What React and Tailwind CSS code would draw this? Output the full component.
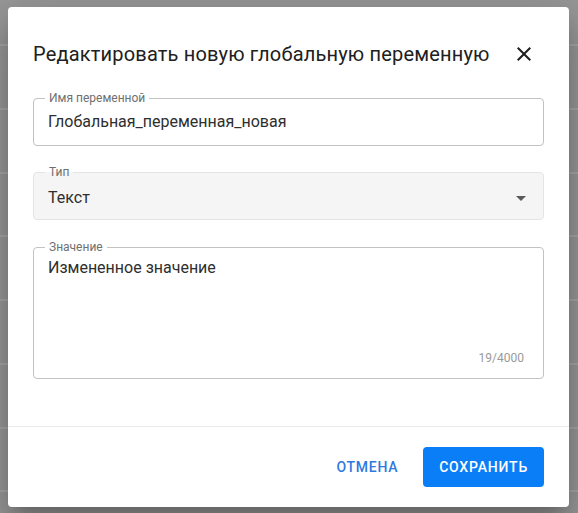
import React from "react";

const font = { fontFamily: "Roboto, 'Noto Sans', Arial, sans-serif" };

function Field({ label, children, className = "", labelBg = "bg-white" }) {
  return (
    <div className={`relative rounded-[4px] border ${className}`}>
      <span
        className={`absolute left-[11px] top-[-8px] px-[4px] text-[12px] leading-[14px] text-[#6f6f6f] ${labelBg}`}
      >
        {label}
      </span>
      {children}
    </div>
  );
}

export default function App() {
  const rows = Array.from({ length: 8 });
  return (
    <div className="relative h-[513px] w-[578px] overflow-hidden bg-[#989898]" style={font}>
      {/* dimmed page behind */}
      <div className="flex flex-col">
        <div className="h-[44px] shrink-0" />
        {rows.map((_, i) => (
          <div key={i} className="h-[63.75px] shrink-0 border-t-[2px] border-[#a6a6a6]" />
        ))}
      </div>

      {/* dialog */}
      <div className="absolute left-[8px] top-[7px] flex h-[500px] w-[561px] flex-col rounded-[4px] bg-white shadow-[0_11px_15px_-7px_rgba(0,0,0,0.2),0_24px_38px_3px_rgba(0,0,0,0.14),0_9px_46px_8px_rgba(0,0,0,0.12)]">
        <div className="flex items-center justify-between pl-[25px] pr-[33px] pt-[31px]">
          <h2 className="text-[20px] font-normal leading-[32px] tracking-[0.18px] text-[#202020]">
            Редактировать новую глобальную переменную
          </h2>
          <svg viewBox="0 0 24 24" className="h-[24px] w-[24px] fill-[#1f1f1f]">
            <path d="M19 6.41 17.59 5 12 10.59 6.41 5 5 6.41 10.59 12 5 17.59 6.41 19 12 13.41 17.59 19 19 17.59 13.41 12z" />
          </svg>
        </div>

        <div className="flex flex-col gap-[26px] px-[25px] pt-[28px]">
          <Field label="Имя переменной" className="h-[48px] border-[#c2c2c2]">
            <div className="flex h-full items-center pl-[14px] text-[16px] text-[#2e2e2e]">
              Глобальная_переменная_новая
            </div>
          </Field>

          <Field
            label="Тип"
            className="h-[48px] border-[#e4e4e4] bg-[#f5f5f5]"
            labelBg="bg-[linear-gradient(to_bottom,#ffffff_50%,#f5f5f5_50%)]"
          >
            <div className="flex h-full items-center justify-between pl-[14px] pr-[10px] pt-[3px] text-[16px] text-[#2e2e2e]">
              <span>Текст</span>
              <svg viewBox="0 0 24 24" className="h-[24px] w-[24px] fill-[#5a5a5a]">
                <path d="M7 10l5 5 5-5z" />
              </svg>
            </div>
          </Field>

          <Field label="Значение" className="mt-[1px] h-[132px] border-[#c2c2c2]">
            <div className="flex h-full flex-col justify-between pb-[12px] pl-[14px] pr-[19px] pt-[10px]">
              <div className="text-[16px] leading-[20px] text-[#2e2e2e]">Измененное значение</div>
              <div className="self-end text-[12px] leading-[16px] text-[#9a9a9a]">19/4000</div>
            </div>
          </Field>
        </div>

        <div className="mt-auto border-t border-[#ececec]">
          <div className="flex items-center justify-end gap-[25px] px-[25px] pb-[20px] pt-[20px]">
            <button className="text-[14px] font-medium uppercase tracking-[0.7px] text-[#2f79dd]">
              Отмена
            </button>
            <button className="h-[40px] rounded-[4px] bg-[#0a7ef7] px-[16px] text-[14px] font-medium uppercase tracking-[0.8px] text-white">
              Сохранить
            </button>
          </div>
        </div>
      </div>
    </div>
  );
}
